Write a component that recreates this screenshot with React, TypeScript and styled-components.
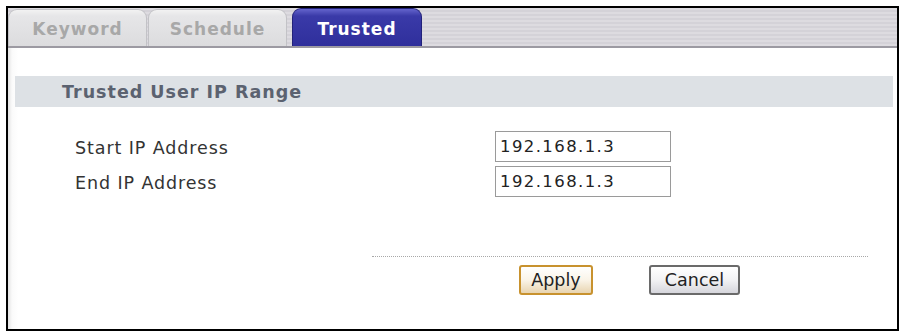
import React from 'react';
import styled, { createGlobalStyle, css } from 'styled-components';

const GlobalStyle = createGlobalStyle`
  html, body {
    margin: 0;
    padding: 0;
    background: #ffffff;
  }
  body {
    font-family: "DejaVu Sans", Verdana, sans-serif;
    color: #333333;
  }
`;

const Frame = styled.div`
  box-sizing: border-box;
  margin: 6px 0 0 6px;
  width: 893px;
  height: 325px;
  border: 2px solid #000000;
  background: linear-gradient(to right, #e2e2e2 0, #fafafa 4px, #ffffff 10px);
  display: flex;
  flex-direction: column;
`;

const TabBar = styled.div`
  box-sizing: border-box;
  height: 40px;
  display: flex;
  align-items: flex-end;
  border-bottom: 2px solid #9c9aa2;
  background: repeating-linear-gradient(
    to bottom,
    #dddbe0 0,
    #dddbe0 2px,
    #d4d2d8 2px,
    #d4d2d8 4px
  );
`;

const Tab = styled.div<{ $active?: boolean; $width: number; $gap?: number }>`
  box-sizing: border-box;
  width: ${({ $width }) => $width}px;
  margin-left: ${({ $gap }) => $gap ?? 0}px;
  display: flex;
  align-items: center;
  justify-content: center;
  padding-top: 2px;
  font-weight: bold;
  font-size: 17px;
  letter-spacing: 1px;
  border-radius: 9px 9px 0 0;
  ${({ $active }) =>
    $active
      ? css`
          height: 38px;
          color: #ffffff;
          background: linear-gradient(to bottom, #6464cc 0, #3a3aa8 7px, #2f2f9c 100%);
          border: 1px solid #22227a;
          border-bottom: none;
        `
      : css`
          height: 37px;
          color: #a8a8a8;
          background: linear-gradient(to bottom, #f2f2f2 0, #e6e6e8 6px, #dcdcde 100%);
          border: 1px solid #c2c2c6;
          border-bottom: none;
        `}
`;

const Content = styled.div`
  padding: 28px 4px 0 7px;
  display: flex;
  flex-direction: column;
`;

const SectionBar = styled.div`
  height: 31px;
  display: flex;
  align-items: center;
  padding-left: 47px;
  background: #dde1e5;
  color: #5b6270;
  font-weight: bold;
  font-size: 17.5px;
  letter-spacing: 1px;
`;

const FieldGrid = styled.div`
  margin: 24px 0 0 60px;
  display: grid;
  grid-template-columns: 420px 176px;
  row-gap: 4px;
  align-items: center;
`;

const Label = styled.span`
  font-size: 17.5px;
  letter-spacing: 0.9px;
  padding-top: 2px;
  color: #333333;
`;

const IpInput = styled.input`
  box-sizing: border-box;
  width: 176px;
  height: 31px;
  border: 1px solid #9a9a9a;
  padding: 0 0 0 4px;
  font-family: "DejaVu Sans", Verdana, sans-serif;
  font-size: 16.5px;
  letter-spacing: 1.4px;
  color: #222222;
  background: #ffffff;
`;

const Footer = styled.div`
  margin: 59px 0 0 357px;
  width: 496px;
  border-top: 1px dotted #a8a8a8;
  padding-top: 8px;
  display: flex;
  justify-content: flex-start;
`;

const Button = styled.button<{ $primary?: boolean; $width: number; $offset: number }>`
  box-sizing: border-box;
  width: ${({ $width }) => $width}px;
  height: 30px;
  margin-left: ${({ $offset }) => $offset}px;
  font-family: "DejaVu Sans", Verdana, sans-serif;
  font-size: 17.5px;
  color: #222222;
  border-radius: 3px;
  padding: 0;
  ${({ $primary }) =>
    $primary
      ? css`
          border: 2px solid #c8922e;
          background: linear-gradient(to bottom, #ffffff 0, #faf4e8 50%, #e8d4b0 100%);
        `
      : css`
          border: 2px solid #6a6a6a;
          background: linear-gradient(to bottom, #ffffff 0, #f2f2f4 50%, #d6d6dc 100%);
        `}
`;

export default function App() {
  return (
    <>
      <GlobalStyle />
      <Frame>
        <TabBar>
          <Tab $width={139}>Keyword</Tab>
          <Tab $width={139} $gap={1}>Schedule</Tab>
          <Tab $width={130} $gap={5} $active>Trusted</Tab>
        </TabBar>
        <Content>
          <SectionBar>Trusted User IP Range</SectionBar>
          <FieldGrid>
            <Label>Start IP Address</Label>
            <IpInput defaultValue="192.168.1.3" />
            <Label>End IP Address</Label>
            <IpInput defaultValue="192.168.1.3" />
          </FieldGrid>
          <Footer>
            <Button $primary $width={74} $offset={147}>Apply</Button>
            <Button $width={91} $offset={56}>Cancel</Button>
          </Footer>
        </Content>
      </Frame>
    </>
  );
}
